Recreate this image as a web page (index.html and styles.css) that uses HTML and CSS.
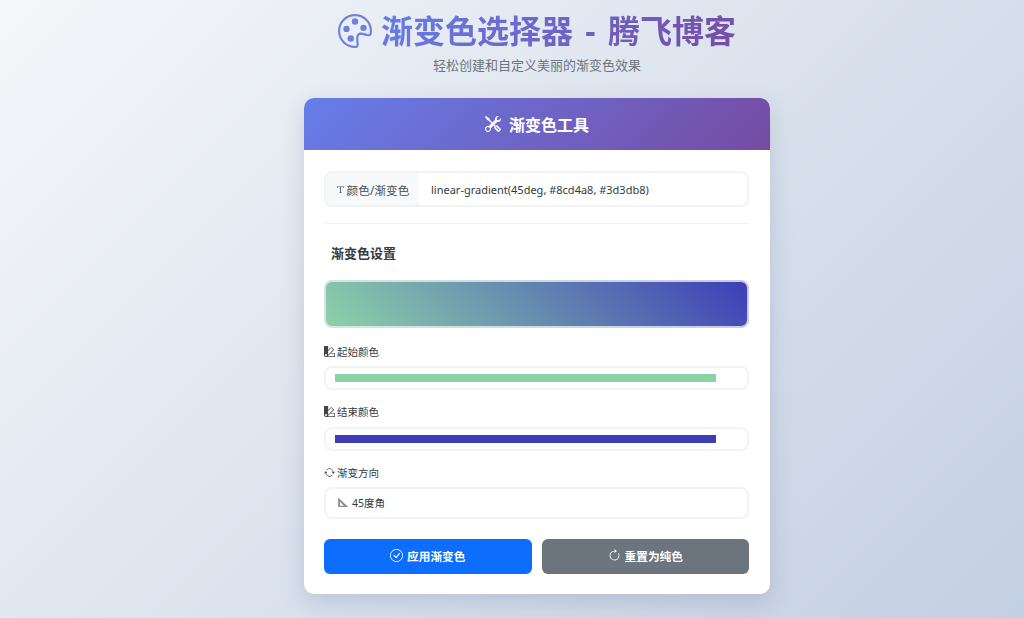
FILE: index.html
```html
<!DOCTYPE html>
<html lang="zh-CN">
<head>
    <meta charset="UTF-8">
    <meta name="viewport" content="width=device-width, initial-scale=1.0">
    <title>渐变色选择器 - 腾飞博客</title>
    <link rel="stylesheet" href="styles.css">
</head>
<body>
    <header class="page-header">
        <div class="title-row">
            <svg class="title-icon" viewBox="0 0 16 16" fill="#6f80e0">
                <path d="M8 5a1.5 1.5 0 1 0 0-3 1.5 1.5 0 0 0 0 3zm4 3a1.5 1.5 0 1 0 0-3 1.5 1.5 0 0 0 0 3zM5.5 7a1.5 1.5 0 1 1-3 0 1.5 1.5 0 0 1 3 0zm.5 6a1.5 1.5 0 1 0 0-3 1.5 1.5 0 0 0 0 3z"/>
                <path d="M16 8c0 3.15-1.866 2.585-3.567 2.07C11.42 9.763 10.465 9.473 10 10c-.603.683-.475 1.819-.351 2.92C9.826 14.495 9.996 16 8 16a8 8 0 1 1 8-8zm-8 7c.611 0 .654-.171.655-.176.078-.146.124-.464.07-1.119-.014-.168-.037-.37-.061-.591-.052-.464-.112-1.005-.118-1.462-.01-.707.083-1.61.704-2.314.369-.417.845-.578 1.272-.618.404-.038.812.026 1.16.104.343.077.702.186 1.025.284l.028.008c.346.105.658.199.953.266.653.148.904.083.991.024C14.717 9.38 15 9.161 15 8a7 7 0 1 0-7 7z"/>
            </svg>
            <h1>渐变色选择器 - 腾飞博客</h1>
        </div>
        <p>轻松创建和自定义美丽的渐变色效果</p>
    </header>

    <main class="card">
        <div class="card-header">
            <svg class="icon-tools" viewBox="0 0 16 16" fill="#fff">
                <path d="M1 0 0 1l2.200 3.081a1 1 0 0 0 .815.419h.070a1 1 0 0 1 .708.293l2.675 2.675-2.617 2.654A3.003 3.003 0 0 0 0 13a3 3 0 1 0 5.878-.851l2.654-2.617.968.968-.305.914a1 1 0 0 0 .242 1.023l3.270 3.270a.997.997 0 0 0 1.414 0l1.586-1.586a.997.997 0 0 0 0-1.414l-3.270-3.270a1 1 0 0 0-1.023-.242L10.500 9.500l-.960-.960 2.680-2.643A3.005 3.005 0 0 0 16 3c0-.269-.035-.530-.102-.777l-2.140 2.141L12 4l-.364-1.757L13.777.102a3 3 0 0 0-3.675 3.680L7.462 6.460 4.793 3.793a1 1 0 0 1-.293-.707v-.071a1 1 0 0 0-.419-.814L1 0zm9.646 10.646a.500.500 0 0 1 .708 0l2.914 2.915a.500.500 0 0 1-.707.707l-2.915-2.914a.500.500 0 0 1 0-.708zM3 11l.471.242.529.026.287.445.445.287.026.529L5 13l-.242.471-.026.529-.445.287-.287.445-.529.026L3 15l-.471-.242L2 14.732l-.287-.445L1.268 14l-.026-.529L1 13l.242-.471.026-.529.445-.287.287-.445.529-.026L3 11z"/>
            </svg>
            <span>渐变色工具</span>
        </div>
        <div class="card-body">
            <div class="input-group">
                <span class="input-label"><svg class="icon-t" viewBox="0 0 16 16" fill="#6c757d"><path d="M2 2h12v3.500h-1C12.800 4 12.300 3.200 11 3.200H9V12.500c0 .8.500 1 1.500 1v.8h-5v-.8c1 0 1.500-.2 1.500-1V3.200H5c-1.300 0-1.800.8-2 2.300H2V2z"/></svg>颜色/渐变色</span>
                <span class="input-value">linear-gradient(45deg, #8cd4a8, #3d3db8)</span>
            </div>
            <hr class="divider">
            <h2 class="section-title">渐变色设置</h2>
            <div class="preview"></div>

            <label class="field-label">
                <svg class="icon-small" viewBox="0 0 16 16" fill="#444"><path fill-rule="evenodd" d="M0 .500A.500.500 0 0 1 .500 0h5a.500.500 0 0 1 .500.500v5.277l4.147-4.131a.500.500 0 0 1 .707 0l3.535 3.536a.500.500 0 0 1 0 .708L10.261 10H15.500a.500.500 0 0 1 .500.500v5a.500.500 0 0 1-.500.500H3a3 3 0 0 1-3-3V.500zm6 12.334 7.328-7.300-2.829-2.828L6 7.188v5.646zM4.500 13a1.500 1.500 0 1 0-3 0 1.500 1.500 0 0 0 3 0zM15 15v-4H9.258l-4.015 4H15z"/></svg>
                起始颜色
            </label>
            <div class="color-input"><div class="swatch swatch-start"></div></div>

            <label class="field-label">
                <svg class="icon-small" viewBox="0 0 16 16" fill="#444"><path fill-rule="evenodd" d="M0 .500A.500.500 0 0 1 .500 0h5a.500.500 0 0 1 .500.500v5.277l4.147-4.131a.500.500 0 0 1 .707 0l3.535 3.536a.500.500 0 0 1 0 .708L10.261 10H15.500a.500.500 0 0 1 .500.500v5a.500.500 0 0 1-.500.500H3a3 3 0 0 1-3-3V.500zm6 12.334 7.328-7.300-2.829-2.828L6 7.188v5.646zM4.500 13a1.500 1.500 0 1 0-3 0 1.500 1.500 0 0 0 3 0zM15 15v-4H9.258l-4.015 4H15z"/></svg>
                结束颜色
            </label>
            <div class="color-input"><div class="swatch swatch-end"></div></div>

            <label class="field-label field-label-last">
                <svg class="icon-small" viewBox="0 0 16 16" fill="#444"><path d="M11.534 7h3.932a.250.250 0 0 1 .192.410l-1.966 2.360a.250.250 0 0 1-.384 0l-1.966-2.360a.250.250 0 0 1 .192-.410zm-11 2h3.932a.250.250 0 0 0 .192-.410L2.692 6.230a.250.250 0 0 0-.384 0L.342 8.590A.250.250 0 0 0 .534 9z"/><path fill-rule="evenodd" d="M8 3c-1.552 0-2.940.707-3.857 1.818a.500.500 0 1 1-.771-.636A6.002 6.002 0 0 1 13.917 7H12.900A5.002 5.002 0 0 0 8 3zM3.100 9a5.002 5.002 0 0 0 8.757 2.182.500.500 0 1 1 .771.636A6.002 6.002 0 0 1 2.083 9H3.100z"/></svg>
                渐变方向
            </label>
            <div class="select-box">
                <svg class="icon-triangle" viewBox="0 0 16 16" fill="#8a8f94"><path d="M1.500 2v12.500H15L1.500 2zm2.500 5.500l5 5.500H4V7.500z" fill-rule="evenodd"/></svg>
                <span>45度角</span>
            </div>

            <div class="button-row">
                <button class="btn btn-primary" type="button">
                    <svg class="btn-icon" viewBox="0 0 16 16" fill="#fff"><path d="M8 15A7 7 0 1 1 8 1a7 7 0 0 1 0 14zm0 1A8 8 0 1 0 8 0a8 8 0 0 0 0 16z"/><path d="M10.970 4.970a.750.750 0 0 1 1.070 1.050l-3.990 4.990a.750.750 0 0 1-1.080.020L4.324 8.384a.750.750 0 1 1 1.060-1.060l2.094 2.093 3.473-4.425z"/></svg>
                    应用渐变色
                </button>
                <button class="btn btn-secondary" type="button">
                    <svg class="btn-icon" viewBox="0 0 16 16" fill="#fff"><path fill-rule="evenodd" d="M8 3a5 5 0 1 0 4.546 2.914.500.500 0 0 1 .908-.417A6 6 0 1 1 8 2v1z"/><path d="M8 4.466V.534a.250.250 0 0 1 .410-.192l2.360 1.966c.120.100.120.284 0 .384L8.410 4.658A.250.250 0 0 1 8 4.466z"/></svg>
                    重置为纯色
                </button>
            </div>
        </div>
    </main>
</body>
</html>
```

FILE: styles.css
```css
* {
    box-sizing: border-box;
}
body {
    margin: 0;
    height: 618px;
    padding-left: 50px;
    overflow: hidden;
    font-family: "Noto Sans", "Noto Sans CJK SC", sans-serif;
    color: #212529;
    background: linear-gradient(135deg, #f5f7fa 0%, #c3cfe2 100%);
    display: flex;
    flex-direction: column;
    align-items: center;
}
.page-header {
    text-align: center;
    padding-top: 8px;
    height: 98px;
}
.title-row {
    display: flex;
    align-items: center;
    justify-content: center;
    gap: 9px;
    width: 420px;
}
.title-icon {
    width: 34px;
    height: 34px;
}
.page-header h1 {
    margin: 0;
    font-size: 32px;
    line-height: 46px;
    font-weight: 700;
    word-spacing: 4px;
    white-space: nowrap;
    background: linear-gradient(135deg, #667eea, #764ba2);
    -webkit-background-clip: text;
    background-clip: text;
    color: transparent;
}
.page-header p {
    margin: 1px 0 0;
    font-size: 13px;
    line-height: 20px;
    color: #6c757d;
}
.card {
    width: 466px;
    height: 496px;
    background: #fff;
    border-radius: 10px;
    overflow: hidden;
    box-shadow: 0 8px 24px rgba(60, 70, 110, 0.18);
}
.card-header {
    height: 52px;
    padding-bottom: 1px;
    display: flex;
    align-items: center;
    justify-content: center;
    gap: 8px;
    color: #fff;
    font-size: 16px;
    font-weight: 700;
    background: linear-gradient(135deg, #667eea, #764ba2);
}
.icon-tools {
    width: 16px;
    height: 16px;
}
.card-body {
    padding: 21px 21px 0 20px;
}
.input-group {
    display: flex;
    height: 36px;
    border: 2px solid #f1f3f5;
    border-radius: 8px;
    overflow: hidden;
    font-size: 11.7px;
}
.input-label {
    width: 93px;
    display: flex;
    align-items: center;
    justify-content: center;
    gap: 2px;
    background: #f8f9fa;
    color: #495057;
}
.icon-t {
    width: 9px;
    height: 9px;
}
.input-value {
    display: flex;
    align-items: center;
    padding-left: 12px;
    color: #343a40;
    font-size: 11px;
}
.divider {
    margin: 16px 0 0;
    border: 0;
    border-top: 1px solid #f1f3f5;
}
.section-title {
    margin: 19px 0 17px 7px;
    font-size: 13px;
    line-height: 20px;
    font-weight: 700;
    color: #343a40;
}
.preview {
    height: 48px;
    border: 2px solid rgba(233, 236, 239, 0.8);
    border-radius: 8px;
    background: linear-gradient(45deg, #8cd4a8, #3d3db8) border-box;
}
.field-label {
    display: flex;
    align-items: center;
    gap: 2px;
    height: 16px;
    padding-bottom: 2px;
    margin: 16px 0 6px;
    font-size: 10.5px;
    color: #343a40;
}
.color-input + .field-label {
    margin: 14px 0 7px;
}
.color-input + .field-label-last {
    margin-bottom: 6px;
}
.icon-small {
    width: 11px;
    height: 11px;
}
.color-input {
    height: 24px;
    border: 2px solid #f1f3f5;
    border-radius: 8px;
    padding: 6px 31px 6px 9px;
}
.swatch {
    height: 8px;
}
.swatch-start {
    background: #8cd4a8;
}
.swatch-end {
    background: #3d3db8;
}
.select-box {
    height: 32px;
    display: flex;
    align-items: center;
    gap: 3px;
    padding: 0 0 2px 11px;
    border: 2px solid #f1f3f5;
    border-radius: 8px;
    font-size: 10.5px;
    color: #343a40;
}
.icon-triangle {
    width: 12px;
    height: 12px;
}
.button-row {
    display: flex;
    gap: 10px;
    margin-top: 20px;
}
.btn {
    flex: 1;
    height: 35px;
    padding: 0 0 2px;
    display: flex;
    align-items: center;
    justify-content: center;
    gap: 4px;
    border: 0;
    border-radius: 6px;
    color: #fff;
    font-family: inherit;
    font-size: 11.7px;
    font-weight: 700;
}
.btn-primary {
    background: #0d6efd;
}
.btn-secondary {
    background: #6c757d;
}
.btn-icon {
    width: 13px;
    height: 13px;
}
```
